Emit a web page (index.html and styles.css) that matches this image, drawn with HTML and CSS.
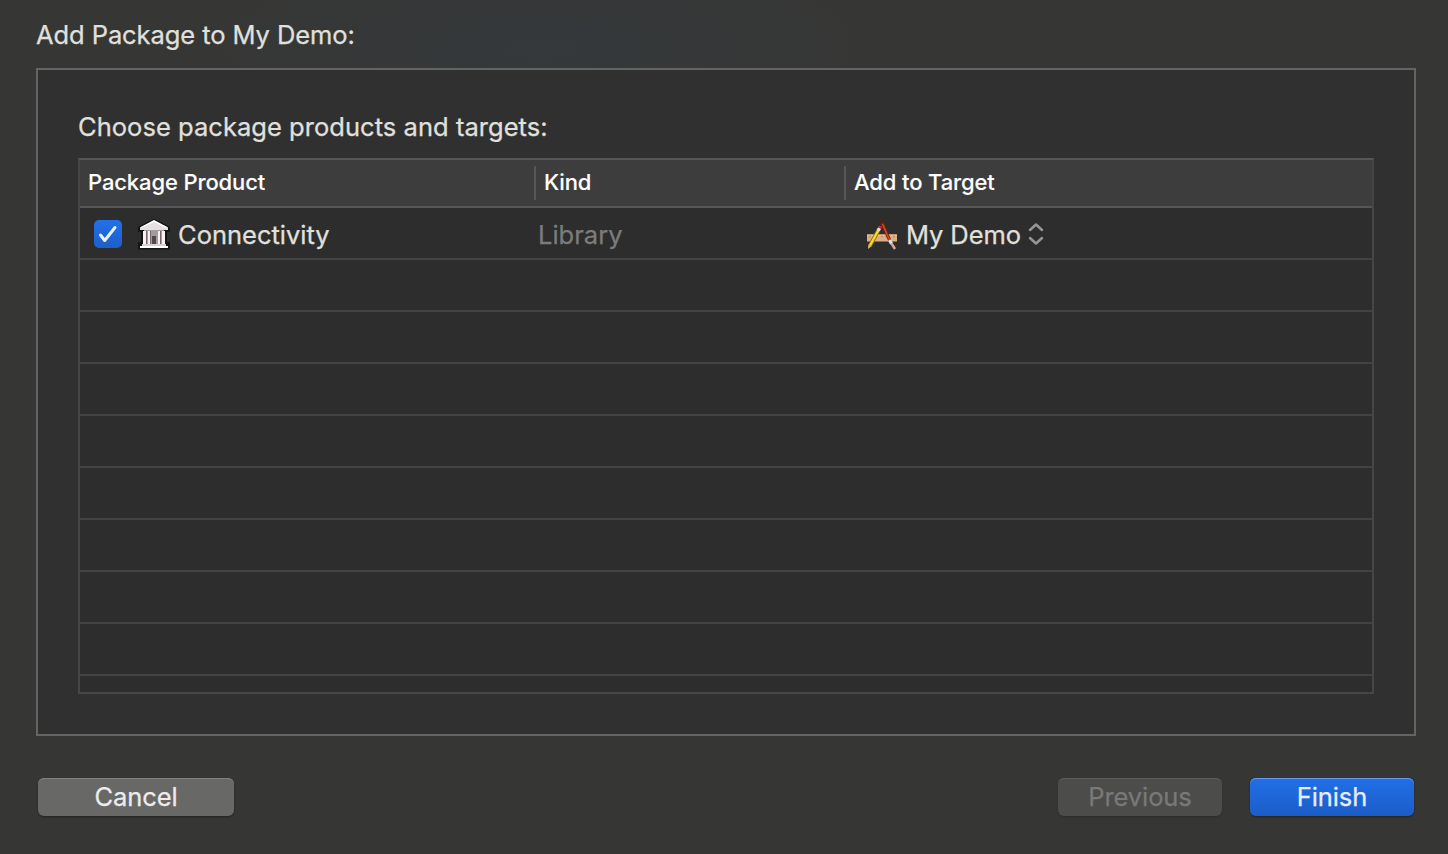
FILE: index.html
```html
<!DOCTYPE html>
<html lang="en">
<head>
<meta charset="utf-8">
<title>Add Package</title>
<link rel="stylesheet" href="styles.css">
</head>
<body>
<main class="sheet">
  <h1 class="sheet-title">Add Package to My Demo:</h1>
  <section class="panel">
    <h2 class="panel-title">Choose package products and targets:</h2>
    <div class="table">
      <div class="head">
        <div class="th">Package Product</div>
        <div class="th">Kind</div>
        <div class="th">Add to Target</div>
      </div>
      <div class="row">
        <div class="product">
          <svg class="check" viewBox="0 0 28 28"><path d="M6.500 15l4.200 5.500L21 7.500"/></svg>
          <svg class="library" viewBox="0 0 34 34">
            <path d="M17 2L32 9.500V13h-3v12h3v5.500H2V25h3V13H2V9.500z" fill="#151515" stroke="#151515" stroke-width="2" stroke-linejoin="round"/>
            <rect x="7" y="12" width="20" height="14" fill="#a39c9e"/>
            <path d="M17 2.500L31 9.500V12H3V9.500z" fill="#e6e0e2"/>
            <path d="M17 2L31 9.500H28L17 4 6 9.500H3z" fill="#fff"/>
            <path d="M6 13h3v13H6zm5 0h2v13h-2zm10 0h2v13h-2zm4 0h3v13h-3z" fill="#f7f3f5"/>
            <path d="M9 13h1v13H9zm4 0h1v13h-1zm10 0h1v13h-1z" fill="#77676a"/>
            <rect x="15" y="18" width="4" height="8" fill="#51484b"/>
            <path d="M5 26h24v2H5z" fill="#d8d2d4"/><path d="M3 28h28v2H3z" fill="#fff"/>
          </svg>
          <span>Connectivity</span>
        </div>
        <div class="kind">Library</div>
        <div class="target">
          <svg class="app" viewBox="0 0 32 32">
            <rect x="1" y="16.500" width="30" height="7" fill="#dcae82"/><path d="M1 17h30" stroke="#f0c9a4"/>
            <path d="M4 17.500v2m4-2v2m8-2v2m4-2v2m8-2v2" stroke="#b28359"/>
            <path d="M14.500 2.500l3 6" stroke="#5e1a10" stroke-width="2"/><path d="M16 5l7.800 17.500" stroke="#7d2411" stroke-width="3.200"/><path d="M16.500 6l7 16" stroke="#cf4a20" stroke-width="1.600"/>
            <path d="M23.500 22l2 3.800" stroke="#dde3ea" stroke-width="3.200"/><path d="M25.500 25.500l3.500 5.500" stroke="#d9a58a" stroke-width="2.600"/>
            <path d="M12.500 12L3.800 28" stroke="#8b6c0b" stroke-width="4"/><path d="M12.500 12L4 27.500" stroke="#f9db28" stroke-width="2.400"/>
            <path d="M13.600 10l-1.300 2.400" stroke="#d9e5ee" stroke-width="3.400"/><path d="M14.700 8.200l-1.100 2" stroke="#e8202b" stroke-width="3.400"/>
            <path d="M2.400 26.600l3 1.600L2 31z" fill="#e2bd84"/>
          </svg>
          <span>My Demo</span>
          <svg class="updown" viewBox="0 0 16 24"><path d="M2 8l6-5.500 6 5.500M2 16l6 5.500 6-5.500"/></svg>
        </div>
      </div>
      <div class="row"></div><div class="row"></div><div class="row"></div><div class="row"></div>
      <div class="row"></div><div class="row"></div><div class="row"></div><div class="row"></div>
    </div>
  </section>
  <footer class="actions">
    <button class="button cancel">Cancel</button>
    <button class="button previous" disabled>Previous</button>
    <button class="button finish">Finish</button>
  </footer>
</main>
</body>
</html>
```
FILE: styles.css
```css
* { box-sizing: border-box; }
body { margin: 0; background: #363635; color: #e0e0df; font: 25.5px/32px Inter, "Liberation Sans", sans-serif; -webkit-text-stroke: 0.25px currentColor; }
.sheet { height: 854px; padding: 19px 32px 0 36px; background: radial-gradient(ellipse 330px 100px at 540px 50px, #35393c, transparent); overflow: hidden; }
h1, h2 { margin: 0; font: inherit; }
.sheet-title { height: 49px; letter-spacing: -0.08px; }
.panel { height: 668px; padding: 41px 40px 0; border: 2px solid #646463; background: #303030; }
.panel-title { height: 47px; letter-spacing: 0.04px; }
.table { height: 536px; border: 2px solid #464646; border-top-color: #565656; background: #2d2d2d; }
.head { display: grid; grid-template-columns: 454px 310px 1fr; align-items: center; height: 48px; border-bottom: 2px solid #565656; background: #3d3d3d; color: #fff; font-size: 22px; font-weight: 500; letter-spacing: -0.12px; -webkit-text-stroke-width: 0.1px; }
.th { height: 34px; padding-left: 8px; }
.th + .th { border-left: 2px solid #565656; }
.row { display: grid; grid-template-columns: 458px 328px 1fr; height: 52px; padding-top: 4px; border-bottom: 2px solid #434343; align-items: center; }
.product, .target { display: flex; align-items: center; }
.check { width: 28px; height: 28px; margin: -2px 0 0 14px; border-radius: 5px; background: linear-gradient(#2270e8, #1c5fc9); fill: none; stroke: #eaf0fb; stroke-width: 3; stroke-linecap: round; stroke-linejoin: round; }
.library { width: 34px; height: 34px; margin: 0 7px 0 15px; }
.kind { color: #7c7c7c; }
.app { width: 32px; height: 32px; margin: -2px 8px 0 0; }
.target { letter-spacing: -0.1px; }
.updown { width: 16px; height: 24px; margin: -2px 0 0 7px; fill: none; stroke: #969696; stroke-width: 2.5; stroke-linecap: round; stroke-linejoin: round; }
.actions { display: flex; margin: 42px 2px 0; }
.button { height: 38px; padding: 0; border: 0; border-radius: 6px; font: inherit; letter-spacing: -0.1px; color: #ececec; box-shadow: 0 1px 2px #0006, inset 0 1px #818180; background: #686867; }
.cancel { width: 196px; margin-right: auto; }
.previous { width: 164px; margin-right: 28px; background: #4c4c4b; color: #797978; box-shadow: 0 1px 2px #0003, inset 0 1px #5b5b5a; }
.finish { width: 164px; color: #e5eefd; background: linear-gradient(#216fe7, #1b5dc8); box-shadow: 0 1px 2px #0006, inset 0 1px #6499ed; }
```
